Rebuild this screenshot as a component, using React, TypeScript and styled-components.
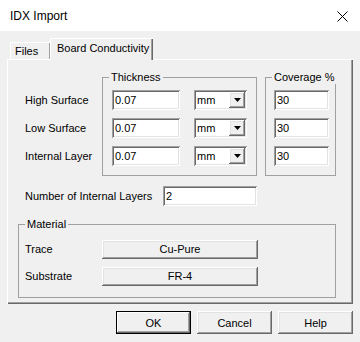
import React from 'react'
import styled, { createGlobalStyle } from 'styled-components'

const GlobalStyle = createGlobalStyle`
    html, body {
        margin: 0;
        padding: 0;
        background: #f0f0f0;
    }
    * {
        box-sizing: border-box;
    }
`

const raised = `
    box-shadow: inset -1px -1px #696969, inset 1px 1px #ffffff, inset -2px -2px #a0a0a0, inset 2px 2px #e3e3e3;
`

const sunken = `
    box-shadow: inset 1px 1px #a0a0a0, inset -1px -1px #ffffff, inset 2px 2px #696969, inset -2px -2px #e3e3e3;
`

const Window = styled.div`
    width: 360px;
    height: 342px;
    background: #f0f0f0;
    display: flex;
    flex-direction: column;
    font-family: "Liberation Sans", Arial, sans-serif;
    font-size: 11px;
    color: #000;
    overflow: hidden;
`

const TitleBar = styled.div`
    height: 31px;
    flex-shrink: 0;
    background: #ffffff;
    display: flex;
    align-items: center;
    justify-content: space-between;
    padding: 1px 12px 0 10px;
    font-size: 12px;
`

const Body = styled.div`
    padding: 7px 7px 0 7px;
    display: flex;
    flex-direction: column;
`

const TabStrip = styled.div`
    height: 21px;
    display: flex;
    align-items: flex-end;
    padding-left: 3px;
    position: relative;
    z-index: 1;
`

const Tab = styled.div<{ $active?: boolean }>`
    height: ${p => (p.$active ? '22px' : '17px')};
    margin-bottom: ${p => (p.$active ? '-1px' : '0')};
    width: ${p => (p.$active ? '103px' : '40px')};
    padding: ${p => (p.$active ? '4px 0 0 7px' : '3px 0 0 5px')};
    background: #f0f0f0;
    box-shadow: ${p => (p.$active
        ? 'inset 1px 1px #ffffff, inset -1px 0 #696969, inset -2px 0 #a0a0a0'
        : 'inset 1px 1px #ffffff, inset -1px 0 #a0a0a0')};
    line-height: 13px;
`

const Panel = styled.div`
    height: 245px;
    width: 346px;
    flex-shrink: 0;
    padding: 12px 0 0 11px;
    box-shadow: inset 1px 1px #ffffff, inset -1px -1px #696969, inset -2px -2px #a0a0a0;
    display: flex;
    flex-direction: column;
`

const TopRow = styled.div`
    display: flex;
    align-items: flex-start;
`

const LabelColumn = styled.div`
    width: 84px;
    flex-shrink: 0;
    padding: 19px 0 0 7px;
    display: flex;
    flex-direction: column;
    gap: 8px;
`

const RowLabel = styled.div<{ $w?: number }>`
    height: 20px;
    line-height: 20px;
    white-space: nowrap;
    width: ${p => (p.$w ? `${p.$w}px` : 'auto')};
    flex-shrink: 0;
`

const Group = styled.fieldset<{ $w: number; $ml?: number }>`
    margin: 0 0 0 ${p => p.$ml ?? 0}px;
    width: ${p => p.$w}px;
    min-width: 0;
    flex-shrink: 0;
    border: 1px solid #a0a0a0;
    padding: 0;
`

const GroupBody = styled.div<{ $pl: number; $pt: number; $pb: number; $gap?: number }>`
    padding: ${p => `${p.$pt}px 0 ${p.$pb}px ${p.$pl}px`};
    display: flex;
    flex-direction: column;
    gap: ${p => p.$gap ?? 8}px;
`

const Legend = styled.legend`
    margin-left: 6px;
    padding: 0 2px;
    line-height: 13px;
    font-size: 11px;
    white-space: nowrap;
`

const FieldRow = styled.div<{ $gap?: number }>`
    display: flex;
    align-items: center;
    gap: ${p => p.$gap ?? 0}px;
`

const TextBox = styled.div<{ $w: number }>`
    width: ${p => p.$w}px;
    height: 20px;
    flex-shrink: 0;
    background: #ffffff;
    ${sunken}
    padding: 0 3px;
    line-height: 20px;
    font-size: 11px;
`

const Combo = styled.div`
    width: 53px;
    height: 20px;
    flex-shrink: 0;
    background: #ffffff;
    ${sunken}
    display: flex;
    align-items: center;
    justify-content: space-between;
    padding: 2px 2px 2px 3px;
    font-size: 11px;
`

const ComboButton = styled.div`
    width: 16px;
    height: 16px;
    background: #f0f0f0;
    ${raised}
    display: flex;
    align-items: center;
    justify-content: center;
`

const NumberRow = styled.div`
    display: flex;
    align-items: center;
    margin-top: 10px;
    padding-left: 7px;
`

const MaterialGroup = styled(Group)`
    margin-top: 12px;
`

const MatButton = styled.div`
    width: 156px;
    height: 19px;
    background: #f0f0f0;
    ${raised}
    display: flex;
    align-items: center;
    justify-content: center;
    font-size: 11px;
`

const Footer = styled.div`
    display: flex;
    justify-content: flex-end;
    gap: 6px;
    padding: 7px 7px 0 0;
`

const DialogButton = styled.div<{ $default?: boolean }>`
    width: 75px;
    height: 23px;
    background: #f0f0f0;
    display: flex;
    align-items: center;
    justify-content: center;
    font-size: 11px;
    box-shadow: ${p => (p.$default
        ? 'inset 0 0 0 1px #000000, inset -2px -2px #696969, inset 2px 2px #ffffff, inset -3px -3px #a0a0a0'
        : 'inset -1px -1px #696969, inset 1px 1px #ffffff, inset -2px -2px #a0a0a0, inset 2px 2px #e3e3e3')};
`

const CloseIcon = () => (
    <svg width="11" height="11" viewBox="0 0 11 11">
        <path d="M0.5 0.5 L10.5 10.5 M10.5 0.5 L0.5 10.5" stroke="#000" strokeWidth="1" fill="none" />
    </svg>
)

const Arrow = () => (
    <svg width="7" height="4" viewBox="0 0 7 4">
        <path d="M0 0 H7 L3.5 4 Z" fill="#000" />
    </svg>
)

const rows = ['High Surface', 'Low Surface', 'Internal Layer']

const App = () => {
    return (
        <>
            <GlobalStyle />
            <Window>
                <TitleBar>
                    <span>IDX Import</span>
                    <CloseIcon />
                </TitleBar>
                <Body>
                    <TabStrip>
                        <Tab>Files</Tab>
                        <Tab $active>Board Conductivity</Tab>
                    </TabStrip>
                    <Panel>
                        <TopRow>
                            <LabelColumn>
                                {rows.map(r => (
                                    <RowLabel key={r}>{r}</RowLabel>
                                ))}
                            </LabelColumn>
                            <Group $w={155}>
                                <Legend>Thickness</Legend>
                                <GroupBody $pl={9} $pt={6} $pb={9}>
                                    {rows.map(r => (
                                        <FieldRow key={r} $gap={14}>
                                            <TextBox $w={68}>0.07</TextBox>
                                            <Combo>
                                                <span>mm</span>
                                                <ComboButton><Arrow /></ComboButton>
                                            </Combo>
                                        </FieldRow>
                                    ))}
                                </GroupBody>
                            </Group>
                            <Group $w={71} $ml={8}>
                                <Legend>Coverage %</Legend>
                                <GroupBody $pl={8} $pt={6} $pb={9}>
                                    {rows.map(r => (
                                        <TextBox key={r} $w={55}>30</TextBox>
                                    ))}
                                </GroupBody>
                            </Group>
                        </TopRow>
                        <NumberRow>
                            <RowLabel $w={138}>Number of Internal Layers</RowLabel>
                            <TextBox $w={94}>2</TextBox>
                        </NumberRow>
                        <MaterialGroup $w={318}>
                            <Legend>Material</Legend>
                            <GroupBody $pl={6} $pt={8} $pb={11} $gap={7}>
                                <FieldRow>
                                    <RowLabel $w={77}>Trace</RowLabel>
                                    <MatButton>Cu-Pure</MatButton>
                                </FieldRow>
                                <FieldRow>
                                    <RowLabel $w={77}>Substrate</RowLabel>
                                    <MatButton>FR-4</MatButton>
                                </FieldRow>
                            </GroupBody>
                        </MaterialGroup>
                    </Panel>
                </Body>
                <Footer>
                    <DialogButton $default>OK</DialogButton>
                    <DialogButton>Cancel</DialogButton>
                    <DialogButton>Help</DialogButton>
                </Footer>
            </Window>
        </>
    )
}

export default App
